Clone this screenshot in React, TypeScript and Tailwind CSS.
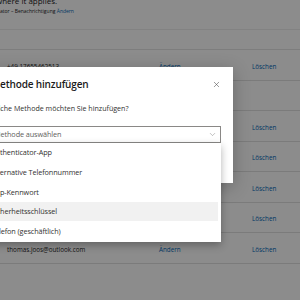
import { ChevronDown, X } from 'lucide-react';

const font = { fontFamily: '"Open Sans", "Noto Sans", sans-serif' };

const rows = [
  { label: '+49 17655462513', edit: true, del: true },
  { label: 'Microsoft Authenticator', edit: false, del: false },
  { label: 'App-Kennwort', edit: true, del: true },
  { label: 'Sicherheitsschlüssel', edit: true, del: true },
  { label: 'Telefon', edit: true, del: true },
  { label: 'Telefon (geschäftlich)', edit: true, del: true },
  { label: 'thomas.joos@outlook.com', edit: true, del: true },
];

const options = [
  'Authenticator-App',
  'Alternative Telefonnummer',
  'App-Kennwort',
  'Sicherheitsschlüssel',
  'Telefon (geschäftlich)',
];

function Page() {
  return (
    <div className="w-[300px] h-[300px] bg-white text-[#1b1b1b]">
      <div className="-mt-[5px] -ml-[4px] text-[8px] leading-[11px] whitespace-nowrap">where it applies.</div>
      <div className="mt-[1px] text-[5px] leading-[8px] whitespace-nowrap">
        ator – Benachrichtigung <span className="text-[#0067b8]">Ändern</span>
      </div>
      <div className="mt-[14px] h-[20px] border-t border-[#ededed]" />
      <div className="border-t border-[#e3e3e3]">
        {rows.map((r, i) => (
          <div key={i} className="h-[30.5px] pt-[3px] flex items-center border-b border-[#e0e0e0] text-[6.3px] whitespace-nowrap">
            <div className="w-[159px] pl-[7px]">{r.label}</div>
            <div className="w-[93px] text-[#0067b8]">{r.edit ? 'Ändern' : ''}</div>
            <div className="text-[#0067b8]">{r.del ? 'Löschen' : ''}</div>
          </div>
        ))}
      </div>
    </div>
  );
}

function Dialog() {
  return (
    <div className="absolute left-[-40px] top-[67px] w-[273px] h-[116px] bg-white shadow-[0_4px_16px_rgba(0,0,0,0.25)]">
      <div className="flex items-center justify-between pl-[31px] pr-[12px] pt-[10px]">
        <div className="text-[10px] font-semibold tracking-[-0.15px] text-[#1b1b1b] leading-[14px]">Methode hinzufügen</div>
        <X size={9} strokeWidth={1.4} className="text-[#444]" />
      </div>
      <div className="pl-[28px] mt-[12px] text-[7.1px] text-[#323130] leading-[10px]">Welche Methode möchten Sie hinzufügen?</div>
      <div className="relative ml-[20px] mr-[12px] mt-[13px]">
        <div className="h-[17px] border border-[#8a8886] flex items-center justify-between pl-[13px] pr-[3px]">
          <span className="text-[7.3px] tracking-[-0.1px] text-[#605e5c]">Methode auswählen</span>
          <ChevronDown size={9} strokeWidth={1.2} className="text-[#777]" />
        </div>
        <div className="absolute left-0 right-0 top-[17px] bg-white shadow-[0_3px_8px_rgba(0,0,0,0.3)] pb-[1px]">
          {options.map((o, i) => (
            <div
              key={o}
              className={`h-[19.6px] flex items-center pl-[11px] mr-[3px] text-[7.3px] tracking-[-0.1px] text-[#323130] ${i === 3 ? 'bg-[#f1f1f1]' : ''}`}
            >
              {o}
            </div>
          ))}
        </div>
      </div>
    </div>
  );
}

export default function App() {
  return (
    <div className="relative w-[300px] h-[300px] overflow-hidden" style={font}>
      <Page />
      <div className="absolute inset-0 bg-black/45" />
      <Dialog />
    </div>
  );
}
